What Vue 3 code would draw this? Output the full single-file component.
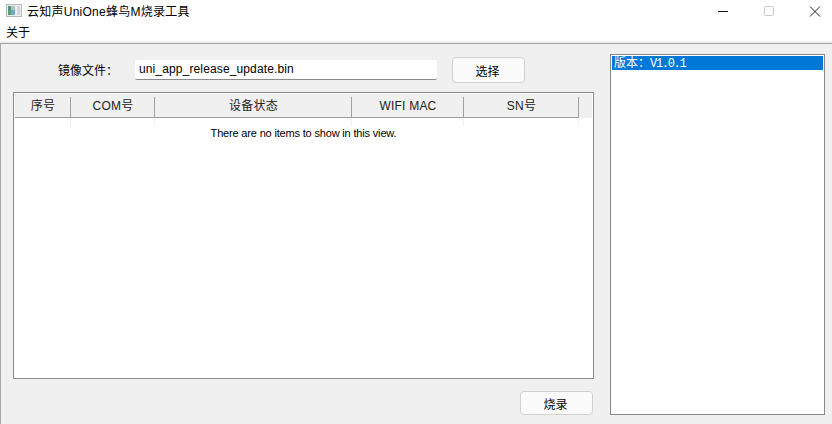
<script setup>
const columns = [
  { label: '序号', width: 56 },
  { label: 'COM号', width: 84 },
  { label: '设备状态', width: 197 },
  { label: 'WIFI MAC', width: 112 },
  { label: 'SN号', width: 115 },
]
</script>

<template>
  <div class="window">
    <header class="titlebar">
      <svg class="app-icon" width="16" height="16" viewBox="0 0 16 16">
        <rect x="0.5" y="1.5" width="15" height="12" fill="#eceef0" stroke="#b4b8bc" />
        <rect x="2" y="3" width="7" height="9" fill="#a9c9c2" />
        <rect x="2" y="3" width="3" height="5" fill="#4d9485" />
        <rect x="2" y="8" width="3" height="4" fill="#5fa06f" />
        <rect x="5" y="7" width="4" height="5" fill="#6fa9c6" />
        <rect x="11" y="3" width="3" height="9" fill="#d4d7da" />
      </svg>
      <span class="title">云知声UniOne蜂鸟M烧录工具</span>
      <div class="controls">
        <span class="ctl"><svg width="12" height="12" viewBox="0 0 12 12"><path d="M1 6.5h10" stroke="#111" fill="none" /></svg></span>
        <span class="ctl"><svg width="12" height="12" viewBox="0 0 12 12"><rect x="1.5" y="1.5" width="9" height="9" rx="1" fill="none" stroke="#c8c8c8" /></svg></span>
        <span class="ctl"><svg width="12" height="12" viewBox="0 0 12 12"><path d="M1 1.5l10 10M11 1.5L1 11.5" stroke="#222" fill="none" /></svg></span>
      </div>
    </header>
    <nav class="menubar"><span>关于</span></nav>
    <main class="content">
      <section class="left">
        <div class="file-row">
          <label class="file-label">镜像文件：</label>
          <div class="file-input">uni_app_release_update.bin</div>
          <button class="btn pick">选择</button>
        </div>
        <div class="table">
          <div class="thead">
            <div v-for="c in columns" :key="c.label" class="th" :style="{ width: c.width + 'px' }">{{ c.label }}</div>
            <div class="th-rest"></div>
          </div>
          <div class="tbody">
            <div class="ticks">
              <i v-for="c in columns" :key="c.label" :style="{ width: c.width + 'px' }"></i>
            </div>
            <p class="empty">There are no items to show in this view.</p>
          </div>
        </div>
        <div class="actions"><button class="btn burn">烧录</button></div>
      </section>
      <aside class="log">
        <div class="log-item">版本：<span class="ver">V1.0.1</span></div>
      </aside>
    </main>
  </div>
</template>

<style scoped>
.window {
  width: 832px;
  height: 424px;
  display: flex;
  flex-direction: column;
  background: #f0f0f0;
  font-family: "Liberation Sans", "Noto Sans CJK SC", sans-serif;
  font-size: 12px;
  color: #000;
  overflow: hidden;
}
.titlebar {
  height: 22px;
  background: #fff;
  display: flex;
  align-items: center;
  padding-left: 6px;
  flex: none;
}
.app-icon { flex: none; }
.title { margin-left: 5px; font-size: 12px; letter-spacing: 0.25px; position: relative; top: -1px; }
.controls { margin-left: auto; margin-right: -6px; display: flex; height: 22px; }
.ctl {
  width: 46px;
  display: flex;
  align-items: center;
  justify-content: center;
}
.menubar {
  height: 19px;
  background: #fff;
  flex: none;
  display: flex;
  align-items: center;
  padding-left: 6px;
  border-bottom: 2px solid #f0f0f0;
}
.content {
  flex: 1;
  display: flex;
  border-top: 1px solid #a0a0a0;
  border-left: 1px solid #a8a8a8;
  padding: 9px 7px 8px 12px;
  min-height: 0;
}
.left {
  width: 581px;
  flex: none;
  display: flex;
  flex-direction: column;
}
.file-row {
  height: 26px;
  margin-top: 4px;
  display: flex;
  align-items: center;
}
.file-label { margin-left: 45px; width: 76px; font-size: 12px; position: relative; top: -1px; }
.file-input {
  width: 302px;
  height: 20px;
  margin-left: 1px;
  align-self: flex-start;
  margin-top: 3px;
  box-sizing: border-box;
  background: #fff;
  border-bottom: 1px solid #8a8a8a;
  padding: 0 4px;
  line-height: 18px;
  font-size: 12px;
  letter-spacing: 0.13px;
  border-radius: 2px;
}
.btn {
  box-sizing: border-box;
  width: 73px;
  background: #fbfbfb;
  border: 1px solid #d0d0d0;
  border-radius: 4px;
  font: inherit;
  color: #000;
  padding: 0 2px 0 0;
}
.pick { height: 26px; margin-left: 15px; }
.table {
  height: 287px;
  margin-top: 9px;
  box-sizing: border-box;
  border: 1px solid #868a8e;
  background: #fff;
  display: flex;
  flex-direction: column;
}
.thead {
  height: 24px;
  margin: 1px 1px 0 1px;
  box-sizing: border-box;
  display: flex;
  background: #f0f0f0;
  flex: none;
}
.th {
  flex: none;
  box-sizing: border-box;
  border-bottom: 1px solid #a0a0a0;
  background: linear-gradient(#a0a0a0, #a0a0a0) right bottom / 1px 20px no-repeat;
  text-align: center;
  line-height: 24px;
  font-size: 12px;
  letter-spacing: 0.2px;
  color: #222;
}
.th-rest { flex: 1; }
.tbody { flex: 1; position: relative; padding-left: 1px; }
.ticks { display: flex; height: 8px; }
.ticks i { flex: none; box-sizing: border-box; border-right: 1px solid #f0f0f0; }
.empty {
  margin: 0;
  position: absolute;
  top: 8px;
  left: 0;
  right: 0;
  text-align: center;
  font-size: 11px;
  line-height: 14px;
  letter-spacing: -0.17px;
}
.actions { display: flex; justify-content: flex-end; margin-top: 12px; padding-right: 1px; }
.burn { height: 24px; }
.log {
  width: 215px;
  margin-left: 16px;
  margin-top: 1px;
  flex: none;
  box-sizing: border-box;
  border: 1px solid #868a8e;
  background: #fff;
  padding: 1px;
  height: 361px;
}
.log-item {
  height: 14px;
  line-height: 14px;
  background: #0078d7;
  color: #fff;
  padding-left: 2px;
  font-size: 12px;
}
.ver {
  font-family: "Liberation Mono", monospace;
  letter-spacing: -1.3px;
}
</style>

<style>
html, body { margin: 0; background: #f0f0f0; }
</style>
